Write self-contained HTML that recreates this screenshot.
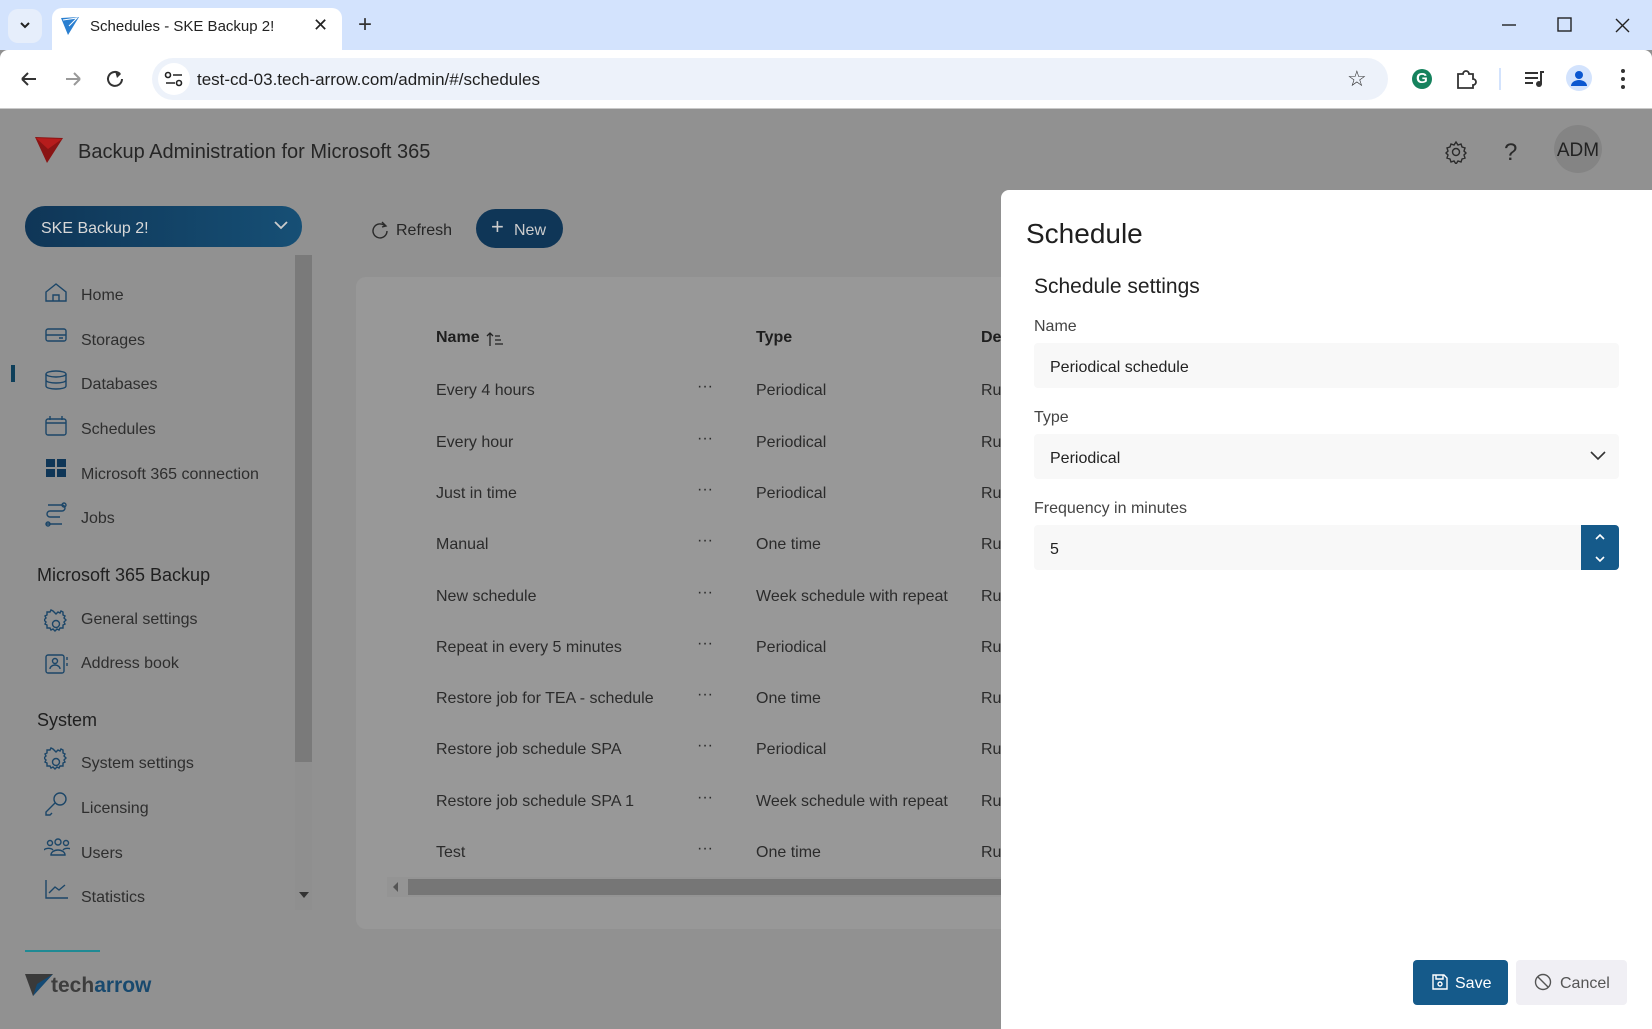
<!DOCTYPE html>
<html><head><meta charset="utf-8"><style>
*{box-sizing:border-box;margin:0;padding:0}
body{width:1652px;height:1029px;overflow:hidden;font-family:"Liberation Sans",sans-serif;background:#919191;position:relative;color:#262626}
.a{position:absolute;white-space:nowrap}
svg{position:absolute}
.nav{font-size:16px;color:#2e2e2e;margin-top:2px}
.row{font-size:16px;color:#2b2b2b;margin-top:2px}
.inp{position:absolute;left:1034px;width:585px;height:45px;background:#f8f8f8;border-radius:4px;font-size:16px;padding:16px 16px 0;color:#222}
.lbl{position:absolute;left:1034px;font-size:16px;color:#444;margin-top:2px}
</style></head><body>
<div class="a" style="left:0;top:0;width:1652px;height:50px;background:#d3e3fd"></div>
<div class="a" style="left:8px;top:9px;width:34px;height:34px;background:#e6eefb;border-radius:10px"></div>
<svg style="left:18px;top:20px" width="14" height="12"><path d="M3 3l4 4 4-4" stroke="#222" stroke-width="2" fill="none"/></svg>
<div class="a" style="left:52px;top:8px;width:290px;height:44px;background:#fff;border-radius:10px 10px 0 0"></div>
<svg style="left:60px;top:16px" width="20" height="20"><path d="M1 2L19 1 8 19z" fill="#2a7fd0"/><path d="M3 4l14-2-8 8" stroke="#fff" stroke-width="1" fill="none"/></svg>
<div class="a" style="left:90px;top:18px;font-size:15px;color:#222">Schedules - SKE Backup 2!</div>
<div class="a" style="left:313px;top:15px;font-size:18px;color:#222">✕</div>
<div class="a" style="left:358px;top:11px;font-size:24px;color:#333">+</div>
<svg style="left:1500px;top:15px" width="150" height="22"><path d="M2 10h14" stroke="#222" stroke-width="1.4"/><rect x="58" y="3" width="13" height="13" stroke="#222" stroke-width="1.4" fill="none"/><path d="M116 4l13 13M129 4l-13 13" stroke="#222" stroke-width="1.4"/></svg>
<div class="a" style="left:0;top:50px;width:1652px;height:58px;background:#fff;border-radius:8px 8px 0 0"></div>
<svg style="left:18px;top:68px" width="110" height="22"><path d="M4 11h14M4 11l6-6M4 11l6 6" stroke="#333" stroke-width="2" fill="none"/><path d="M48 11h14M62 11l-6-6M62 11l-6 6" stroke="#999" stroke-width="2" fill="none"/><path d="M102 6a7 7 0 1 0 2 5" stroke="#333" stroke-width="2" fill="none"/><path d="M97 3l6 3-4 4" fill="#333"/></svg>
<div class="a" style="left:152px;top:58px;width:1236px;height:42px;background:#edf2fa;border-radius:21px"></div>
<div class="a" style="left:158px;top:63px;width:32px;height:32px;background:#fff;border-radius:16px"></div>
<svg style="left:164px;top:70px" width="20" height="18"><circle cx="4" cy="5" r="2.5" stroke="#222" fill="none" stroke-width="1.6"/><path d="M9 5h9M2 13h9" stroke="#222" stroke-width="1.6"/><circle cx="15" cy="13" r="2.5" stroke="#222" fill="none" stroke-width="1.6"/></svg>
<div class="a" style="left:197px;top:70px;font-size:17px;color:#1f1f1f">test-cd-03.tech-arrow.com/admin/#/schedules</div>
<div class="a" style="left:1347px;top:66px;font-size:22px;color:#333">☆</div>
<div class="a" style="left:1412px;top:69px;width:20px;height:20px;border-radius:10px;background:#15825d;color:#fff;font-size:15px;font-weight:bold;text-align:center;line-height:20px">G</div>
<svg style="left:1455px;top:68px" width="22" height="22"><path d="M3 6h5a3 3 0 0 1 6 0h4v5a3 3 0 0 1 0 6v3H3z" stroke="#333" stroke-width="1.8" fill="none"/></svg>
<div class="a" style="left:1499px;top:68px;width:2px;height:22px;background:#d3e3fd"></div>
<svg style="left:1524px;top:69px" width="22" height="20"><path d="M1 4h13M1 9h13M1 14h8" stroke="#333" stroke-width="2"/><circle cx="15" cy="15" r="3" fill="#333"/><path d="M17 15V3h3" stroke="#333" stroke-width="2" fill="none"/></svg>
<div class="a" style="left:1566px;top:65px;width:26px;height:26px;border-radius:13px;background:#d3e3fd"></div>
<svg style="left:1569px;top:68px" width="20" height="20"><circle cx="10" cy="7" r="4" fill="#0b57d0"/><path d="M2 18a8 6 0 0 1 16 0z" fill="#0b57d0"/></svg>
<svg style="left:1620px;top:68px" width="6" height="22"><circle cx="3" cy="3" r="2" fill="#333"/><circle cx="3" cy="11" r="2" fill="#333"/><circle cx="3" cy="19" r="2" fill="#333"/></svg>
<div class="a" style="left:0;top:108px;width:1652px;height:1px;background:#c9c9c9"></div>

<svg style="left:34px;top:136px" width="30" height="28"><path d="M1 1L29 2 13 27z" fill="#8a1414"/><path d="M2 2l26 1-14 10" fill="#b61c1c"/></svg>
<div class="a" style="left:78px;top:141px;font-size:20px;color:#262626">Backup Administration for Microsoft 365</div>
<svg style="left:1444px;top:140px" width="24" height="24"><path d="M12 2l2 3 3-1 1 3 3 1-1 3 2 2-2 2 1 3-3 1-1 3-3-1-2 3-2-3-3 1-1-3-3-1 1-3-2-2 2-2-1-3 3-1 1-3 3 1z" stroke="#2a2a2a" stroke-width="1.4" fill="none"/><circle cx="12" cy="12" r="3.5" stroke="#2a2a2a" stroke-width="1.4" fill="none"/></svg>
<div class="a" style="left:1504px;top:139px;font-size:24px;color:#2a2a2a">?</div>
<div class="a" style="left:1554px;top:125px;width:48px;height:48px;border-radius:24px;background:#848484;font-size:19px;color:#222;text-align:center;line-height:52px">ADM</div>

<div class="a" style="left:25px;top:206px;width:277px;height:41px;border-radius:20px;background:linear-gradient(90deg,#0f3657,#164f75)"></div>
<div class="a" style="left:41px;top:220px;font-size:16px;color:#d8d8d8">SKE Backup 2!</div>
<svg style="left:273px;top:220px" width="16" height="12"><path d="M2 2l6 6 6-6" stroke="#ccc" stroke-width="1.8" fill="none"/></svg>
<div class="a" style="left:295px;top:255px;width:17px;height:507px;background:#7a7a7a"></div>
<div class="a" style="left:295px;top:762px;width:17px;height:148px;background:#8f8f8f"></div>
<div class="a" style="left:299px;top:892px;border:5px solid transparent;border-top:6px solid #333"></div>
<div class="a" style="left:11px;top:365px;width:4px;height:17px;background:#0e3f5a"></div>
<svg style="left:44px;top:282px" width="26" height="640" fill="none" stroke="#1c4668" stroke-width="1.4">
<path d="M2 10L12 2l10 8v9H2z M9 19v-6h6v6"/>
<rect x="2" y="47" width="20" height="12" rx="2"/><path d="M2 53h20M15 56h4"/>
<ellipse cx="12" cy="92" rx="10" ry="3"/><path d="M2 92v12c0 4 20 4 20 0V92M2 98c0 4 20 4 20 0"/>
<rect x="2" y="137" width="20" height="16" rx="2"/><path d="M6 134v4M18 134v4M2 141h20"/>
<g fill="#0f3657" stroke="none"><rect x="2" y="177" width="9" height="8"/><rect x="13" y="177" width="9" height="8"/><rect x="2" y="187" width="9" height="8"/><rect x="13" y="187" width="9" height="8"/></g>
<path d="M4 223h14a3 3 0 0 1 0 6H6a3 3 0 0 0 0 6h10M2 242h16"/><circle cx="20" cy="223" r="2"/><circle cx="4" cy="242" r="2"/>
<path d="M12 332l2-2 2 1 1-2 2 1 0 3 2 1-1 2 2 2-2 2 1 2-2 1 0 3-3 0-1 2-2-1-2 2-2-2-2 1-1-2-3 0 0-3-2-1 1-2-2-2 2-2-1-2 2-1 0-3 3 0 1-2 2 1z"/><circle cx="12" cy="342" r="3.5"/>
<rect x="2" y="373" width="18" height="18" rx="2"/><circle cx="11" cy="379" r="2.5"/><path d="M6 387a5 4 0 0 1 10 0M23 375v3M23 381v3"/>
<path d="M12 470l2-2 2 1 1-2 2 1 0 3 2 1-1 2 2 2-2 2 1 2-2 1 0 3-3 0-1 2-2-1-2 2-2-2-2 1-1-2-3 0 0-3-2-1 1-2-2-2 2-2-1-2 2-1 0-3 3 0 1-2 2 1z"/><circle cx="12" cy="480" r="3.5"/>
<circle cx="16" cy="517" r="6"/><path d="M11 521L2 530v3h4l2-2"/>
<circle cx="6" cy="561" r="2.5"/><circle cx="14" cy="560" r="3"/><circle cx="22" cy="561" r="2.5"/><path d="M0 568a5 3 0 0 1 9 0M7 573a7 5 0 0 1 14 0zM19 568a5 3 0 0 1 9 0"/>
<path d="M2 598v18h22M5 611l6-6 4 3 6-5"/>
</svg>
<div class="a nav" style="left:81px;top:285px">Home</div>
<div class="a nav" style="left:81px;top:330px">Storages</div>
<div class="a nav" style="left:81px;top:374px">Databases</div>
<div class="a nav" style="left:81px;top:419px">Schedules</div>
<div class="a nav" style="left:81px;top:464px">Microsoft 365 connection</div>
<div class="a nav" style="left:81px;top:508px">Jobs</div>
<div class="a" style="left:37px;top:565px;font-size:18px;color:#1f1f1f">Microsoft 365 Backup</div>
<div class="a nav" style="left:81px;top:609px">General settings</div>
<div class="a nav" style="left:81px;top:653px">Address book</div>
<div class="a" style="left:37px;top:710px;font-size:18px;color:#1f1f1f">System</div>
<div class="a nav" style="left:81px;top:753px">System settings</div>
<div class="a nav" style="left:81px;top:798px">Licensing</div>
<div class="a nav" style="left:81px;top:843px">Users</div>
<div class="a nav" style="left:81px;top:887px">Statistics</div>
<div class="a" style="left:25px;top:950px;width:75px;height:2px;background:#1f8a94"></div>
<svg style="left:25px;top:972px" width="30" height="26"><path d="M0 2h28L8 24z" fill="#3a3a3a"/><path d="M28 2L8 24l4-12z" fill="#134a75"/></svg>
<div class="a" style="left:51px;top:974px;font-size:21px;font-weight:bold;color:#3d3d3d">tech<span style="color:#18496e">arrow</span></div>

<svg style="left:371px;top:221px" width="18" height="18"><path d="M14 5a7 7 0 1 0 2 5" stroke="#2a2a2a" stroke-width="1.4" fill="none"/><path d="M11 1l4 4-4 1" stroke="#2a2a2a" stroke-width="1.4" fill="none"/></svg>
<div class="a" style="left:396px;top:222px;font-size:16px;color:#262626">Refresh</div>
<div class="a" style="left:476px;top:209px;width:87px;height:39px;border-radius:20px;background:#0f3657"></div>
<div class="a" style="left:491px;top:214px;font-size:22px;color:#ccc">+</div>
<div class="a" style="left:514px;top:222px;font-size:16px;color:#ccc">New</div>

<div class="a" style="left:356px;top:277px;width:660px;height:652px;background:#989898;border-radius:10px"></div>
<div class="a" style="left:436px;top:329px;font-size:16px;font-weight:bold;color:#1f1f1f">Name</div>
<svg style="left:486px;top:331px" width="20" height="16"><path d="M4 15V2M1 5l3-3 3 3M9 5h5M9 9h6M9 13h8" stroke="#222" stroke-width="1.3" fill="none"/></svg>
<div class="a" style="left:756px;top:329px;font-size:16px;font-weight:bold;color:#1f1f1f">Type</div>
<div class="a" style="left:981px;top:329px;font-size:16px;font-weight:bold;color:#1f1f1f">De</div>
<div class="a row" style="left:436px;top:380px">Every 4 hours</div><div class="a row" style="left:697px;top:376px">···</div><div class="a row" style="left:756px;top:380px">Periodical</div><div class="a row" style="left:981px;top:380px">Ru</div>
<div class="a row" style="left:436px;top:432px">Every hour</div><div class="a row" style="left:697px;top:428px">···</div><div class="a row" style="left:756px;top:432px">Periodical</div><div class="a row" style="left:981px;top:432px">Ru</div>
<div class="a row" style="left:436px;top:483px">Just in time</div><div class="a row" style="left:697px;top:479px">···</div><div class="a row" style="left:756px;top:483px">Periodical</div><div class="a row" style="left:981px;top:483px">Ru</div>
<div class="a row" style="left:436px;top:534px">Manual</div><div class="a row" style="left:697px;top:530px">···</div><div class="a row" style="left:756px;top:534px">One time</div><div class="a row" style="left:981px;top:534px">Ru</div>
<div class="a row" style="left:436px;top:586px">New schedule</div><div class="a row" style="left:697px;top:582px">···</div><div class="a row" style="left:756px;top:586px">Week schedule with repeat</div><div class="a row" style="left:981px;top:586px">Ru</div>
<div class="a row" style="left:436px;top:637px">Repeat in every 5 minutes</div><div class="a row" style="left:697px;top:633px">···</div><div class="a row" style="left:756px;top:637px">Periodical</div><div class="a row" style="left:981px;top:637px">Ru</div>
<div class="a row" style="left:436px;top:688px">Restore job for TEA - schedule</div><div class="a row" style="left:697px;top:684px">···</div><div class="a row" style="left:756px;top:688px">One time</div><div class="a row" style="left:981px;top:688px">Ru</div>
<div class="a row" style="left:436px;top:739px">Restore job schedule SPA</div><div class="a row" style="left:697px;top:735px">···</div><div class="a row" style="left:756px;top:739px">Periodical</div><div class="a row" style="left:981px;top:739px">Ru</div>
<div class="a row" style="left:436px;top:791px">Restore job schedule SPA 1</div><div class="a row" style="left:697px;top:787px">···</div><div class="a row" style="left:756px;top:791px">Week schedule with repeat</div><div class="a row" style="left:981px;top:791px">Ru</div>
<div class="a row" style="left:436px;top:842px">Test</div><div class="a row" style="left:697px;top:838px">···</div><div class="a row" style="left:756px;top:842px">One time</div><div class="a row" style="left:981px;top:842px">Ru</div>
<div class="a" style="left:387px;top:877px;width:620px;height:20px;background:#949494"></div>
<div class="a" style="left:408px;top:879px;width:600px;height:16px;background:#767676"></div>
<div class="a" style="left:393px;top:882px;border:5px solid transparent;border-right:5px solid #555;border-left:0"></div>

<div class="a" style="left:1001px;top:190px;width:651px;height:839px;background:#fff;border-radius:8px 0 0 0"></div>
<div class="a" style="left:1026px;top:218px;font-size:28px;color:#1f1f1f">Schedule</div>
<div class="a" style="left:1034px;top:275px;font-size:21px;color:#222">Schedule settings</div>
<div class="lbl" style="top:316px">Name</div>
<div class="inp" style="top:343px">Periodical schedule</div>
<div class="lbl" style="top:407px">Type</div>
<div class="inp" style="top:434px">Periodical</div>
<svg style="left:1589px;top:450px" width="18" height="12"><path d="M2 2l7 7 7-7" stroke="#333" stroke-width="1.6" fill="none"/></svg>
<div class="lbl" style="top:498px">Frequency in minutes</div>
<div class="inp" style="top:525px">5</div>
<div class="a" style="left:1581px;top:525px;width:38px;height:45px;background:#155a8a;border-radius:0 4px 4px 0"></div>
<svg style="left:1592px;top:531px" width="16" height="34"><path d="M4 8l4-4 4 4M4 26l4 4 4-4" stroke="#fff" stroke-width="1.6" fill="none"/></svg>
<div class="a" style="left:1413px;top:960px;width:95px;height:45px;background:#155a8a;border-radius:4px"></div>
<svg style="left:1432px;top:974px" width="16" height="16"><path d="M1 1h11l3 3v11H1z M4 1v4h7V1" stroke="#fff" stroke-width="1.4" fill="none"/><circle cx="8" cy="10" r="2" stroke="#fff" stroke-width="1.4" fill="none"/></svg>
<div class="a" style="left:1455px;top:975px;font-size:16px;color:#fff">Save</div>
<div class="a" style="left:1516px;top:960px;width:111px;height:45px;background:#f0eff4;border-radius:4px"></div>
<svg style="left:1534px;top:973px" width="18" height="18"><circle cx="9" cy="9" r="7.5" stroke="#555" stroke-width="1.4" fill="none"/><path d="M4 4l10 10" stroke="#555" stroke-width="1.4"/></svg>
<div class="a" style="left:1560px;top:975px;font-size:16px;color:#555">Cancel</div>
</body></html>
